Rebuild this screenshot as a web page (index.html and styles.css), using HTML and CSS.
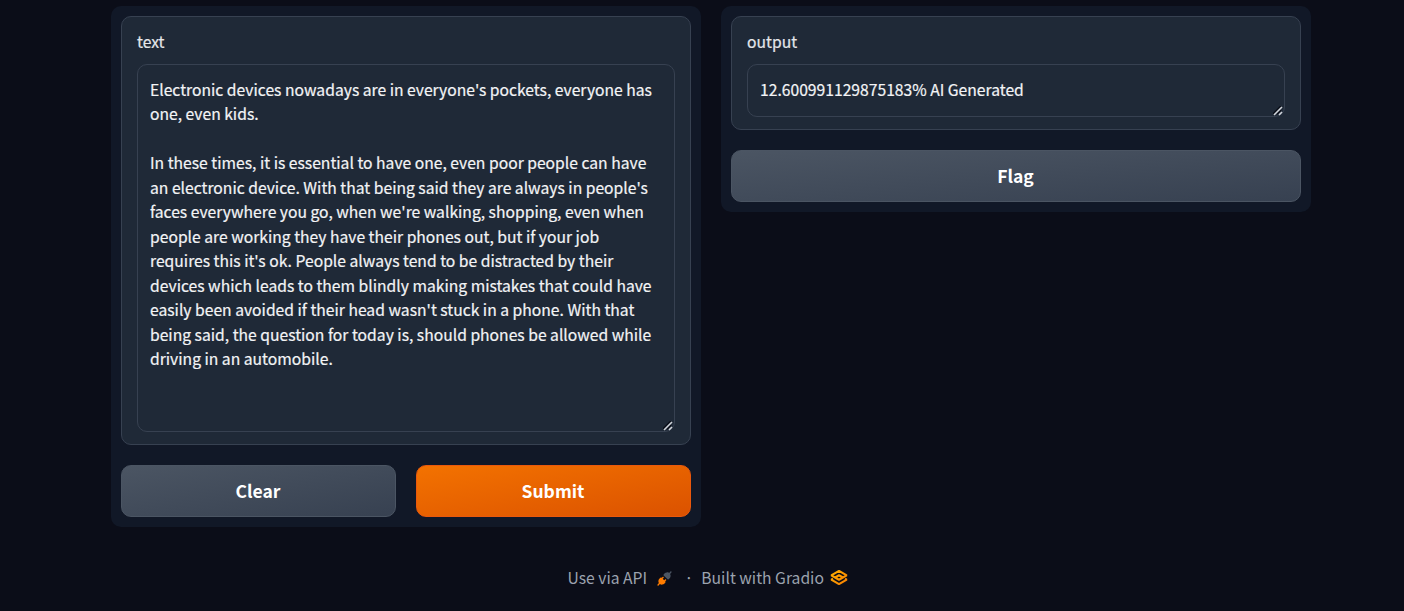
FILE: index.html
```html
<!DOCTYPE html>
<html lang="en">
<head>
<meta charset="utf-8">
<title>Gradio</title>
<link rel="stylesheet" href="styles.css">
</head>
<body>
<main class="columns">
  <section class="panel">
    <div class="block">
      <div class="label">text</div>
      <div class="field field-input">Electronic devices nowadays are in everyone's pockets, everyone has
one, even kids.

In these times, it is essential to have one, even poor people can have
an electronic device. With that being said they are always in people's
faces everywhere you go, when we're walking, shopping, even when
people are working they have their phones out, but if your job
requires this it's ok. People always tend to be distracted by their
devices which leads to them blindly making mistakes that could have
easily been avoided if their head wasn't stuck in a phone. With that
being said, the question for today is, should phones be allowed while
driving in an automobile.<svg class="grip" viewBox="0 0 10 10"><path class="grip-shade" d="M0 8L8 0M4 8L8 4"/><path d="M1 9L9 1M6 9L9 6"/></svg></div>
    </div>
    <div class="buttons">
      <button class="btn">Clear</button>
      <button class="btn primary">Submit</button>
    </div>
  </section>
  <section class="panel">
    <div class="block">
      <div class="label">output</div>
      <div class="field">12.600991129875183% AI Generated<svg class="grip" viewBox="0 0 10 10"><path class="grip-shade" d="M0 8L8 0M4 8L8 4"/><path d="M1 9L9 1M6 9L9 6"/></svg></div>
    </div>
    <div class="buttons">
      <button class="btn">Flag</button>
    </div>
  </section>
</main>
<footer class="footer">
  <span>Use via API</span>
  <svg class="api-icon" viewBox="0 0 28 28"><path fill="#4b5563" d="M26.94 2.94C27.46 2.42 27.46 1.58 26.94 1.06C26.42.54 25.58.54 25.06 1.06L22.57 3.54C21.12 2.59 19.54 2.43 18.18 2.64C16.55 2.89 15.11 3.67 14.39 4.39L12.39 6.39C12.14 6.64 12 6.98 12 7.33C12 7.69 12.14 8.03 12.39 8.28L19.72 15.61C20.24 16.13 21.09 16.13 21.61 15.61L23.61 13.61C24.33 12.89 25.11 11.45 25.36 9.82C25.57 8.46 25.41 6.88 24.46 5.43Z"/><path fill="#ff7c00" d="M12.28 12.94C12.8 12.42 12.8 11.58 12.28 11.06C11.76 10.54 10.91 10.54 10.39 11.06L8.67 12.78L8.28 12.39C8.03 12.14 7.69 12 7.33 12C6.98 12 6.64 12.14 6.39 12.39L4.39 14.39C3.67 15.11 2.89 16.55 2.64 18.18C2.43 19.54 2.59 21.12 3.54 22.57L1.06 25.06C.54 25.58.54 26.42 1.06 26.94C1.58 27.46 2.42 27.46 2.94 26.94L5.43 24.46C6.88 25.41 8.46 25.57 9.82 25.36C11.45 25.11 12.89 24.33 13.61 23.61L15.61 21.61C16.13 21.09 16.13 20.24 15.61 19.72L15.22 19.33L16.94 17.61C17.46 17.09 17.46 16.24 16.94 15.72C16.42 15.2 15.58 15.2 15.06 15.72L13.33 17.45L10.55 14.67Z"/></svg>
  <span class="dot">·</span>
  <span>Built with Gradio</span>
  <svg class="logo" viewBox="26 72 523 432"><defs><linearGradient id="amber" x1="0" y1="0" x2="1" y2="1"><stop offset="0" stop-color="#ffb000"/><stop offset="1" stop-color="#f98000"/></linearGradient></defs><path stroke="url(#amber)" d="M287.5 347L489 231.5L287.5 116L86 231.5L287.5 347L390 288L287.5 229L190 285M130 319L86 344.5L287.5 460L489 344.5L445 319"/></svg>
</footer>
</body>
</html>
```
FILE: styles.css
```css
* { box-sizing: border-box; }
body {
  margin: 0;
  height: 611px;
  overflow: hidden;
  background: #0b0d18;
  color: #f3f4f6;
  font-family: "Source Sans Pro", "Noto Sans CJK JP", "Open Sans", sans-serif;
  font-size: 15.68px;
  line-height: 24.5px;
  -webkit-text-stroke: 0.2px currentColor;
}
.columns {
  display: flex;
  align-items: flex-start;
  gap: 20px;
  width: 1200px;
  margin-left: 111px;
  padding-top: 6px;
}
.panel {
  flex: 1;
  display: flex;
  flex-direction: column;
  gap: 20px;
  padding: 10px;
  border-radius: 10px;
  background: #111827;
}
.block {
  padding: 13px 15px 12px;
  border: 1px solid #374151;
  border-radius: 10px;
  background: #1f2937;
}
.label {
  height: 24px;
  margin-bottom: 10px;
  color: #e5e7eb;
}
.field {
  position: relative;
  height: 53px;
  padding: 12.5px 12px;
  border: 1px solid #374151;
  border-radius: 10px;
  white-space: pre;
}
.field-input { height: 368px; }
.grip {
  position: absolute;
  right: 1px;
  bottom: 0;
  width: 10px;
  height: 10px;
  fill: none;
  stroke: #d1d5db;
  stroke-width: 1.6;
}
.grip-shade { stroke: #0b0f19; }
.buttons { display: flex; gap: 20px; }
.btn {
  flex: 1;
  height: 52px;
  padding: 0 1px 0 0;
  border: 1px solid #4b5563;
  border-radius: 10px;
  background: linear-gradient(to bottom right, #4b5563, #374151);
  color: #fff;
  font: bold 17.5px/30px "Source Sans Pro", "Noto Sans CJK JP", sans-serif;
  -webkit-text-stroke: 0;
}
.primary {
  border-color: #ea580c;
  background: linear-gradient(to bottom right, #f37200, #db5200);
}
.footer {
  display: flex;
  align-items: center;
  width: 284px;
  height: 26px;
  margin: 38px 0 0 567.5px;
  color: #9ca3af;
  white-space: nowrap;
  -webkit-text-stroke: 0;
}
.api-icon { flex: none; width: 15px; height: 15px; margin-left: 10px; }
.dot { margin: 0 8px 0 12.4px; }
.logo {
  width: 20px;
  height: 17px;
  margin: 0 0 2px 5px;
  flex: none;
  fill: none;
  stroke-width: 56;
  stroke-linejoin: bevel;
}
```
